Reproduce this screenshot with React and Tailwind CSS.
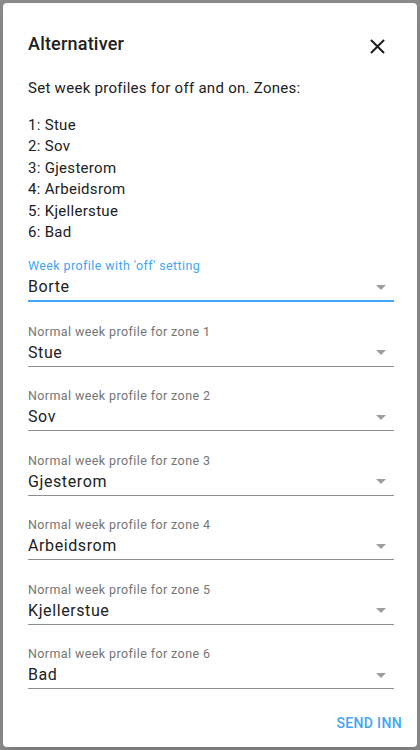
const zones = ['Stue', 'Sov', 'Gjesterom', 'Arbeidsrom', 'Kjellerstue', 'Bad'];

function Arrow() {
  return (
    <svg width="10" height="5" viewBox="0 0 10 5" className="shrink-0">
      <path d="M0 0h10L5 5z" fill="#9e9e9e" />
    </svg>
  );
}

function SelectField({ label, value, focused }) {
  return (
    <div className="mt-[21.5px] first:mt-0">
      <div
        className={`text-[12.5px] leading-4 tracking-[0.4px] ${
          focused ? 'text-[#42a5f5]' : 'text-[#757575]'
        }`}
      >
        {label}
      </div>
      <div
        className={`mt-[1px] flex items-center justify-between pb-[1px] pr-[8px] ${
          focused ? 'border-b-2 border-[#42a5f5]' : 'border-b border-[#8f8f8f]'
        }`}
      >
        <span className="text-[16px] leading-6 tracking-[0.6px] text-[#212121]">{value}</span>
        <Arrow />
      </div>
    </div>
  );
}

export default function App() {
  return (
    <div className="min-h-screen bg-[#8a8a8a] p-[3px] font-['Roboto',sans-serif]">
      <div className="flex h-[744px] flex-col rounded-[4px] bg-white shadow-lg">
        <div className="flex items-center justify-between pl-[25px] pr-[27px] pt-[26px]">
          <h2 className="text-[18px] font-medium leading-7 tracking-[0.2px] text-[#212121]">
            Alternativer
          </h2>
          <svg width="25" height="25" viewBox="0 0 24 24" className="mt-[5px]">
            <path
              d="M19,6.41L17.59,5L12,10.59L6.41,5L5,6.41L10.59,12L5,17.59L6.41,19L12,13.41L17.59,19L19,17.59L13.41,12L19,6.41Z"
              fill="#212121"
            />
          </svg>
        </div>
        <div className="pl-[25px] pr-[23px]">
          <p className="mt-[19px] text-[15px] leading-5 tracking-[0.28px] text-[#212121]">
            Set week profiles for off and on. Zones:
          </p>
          <ul className="mt-[16.5px] text-[15px] leading-[21.6px] tracking-[0.3px] text-[#212121]">
            {zones.map((z, i) => (
              <li key={z}>
                {i + 1}: {z}
              </li>
            ))}
          </ul>
          <div className="mt-[14px]">
            <SelectField label="Week profile with 'off' setting" value="Borte" focused />
            {zones.map((z, i) => (
              <SelectField key={z} label={`Normal week profile for zone ${i + 1}`} value={z} />
            ))}
          </div>
        </div>
        <div className="mt-auto flex justify-end px-[7px] pb-[6px]">
          <button className="h-9 px-2 text-[14px] font-medium uppercase tracking-[0.35px] text-[#42a5f5]">
            Send inn
          </button>
        </div>
      </div>
    </div>
  );
}
